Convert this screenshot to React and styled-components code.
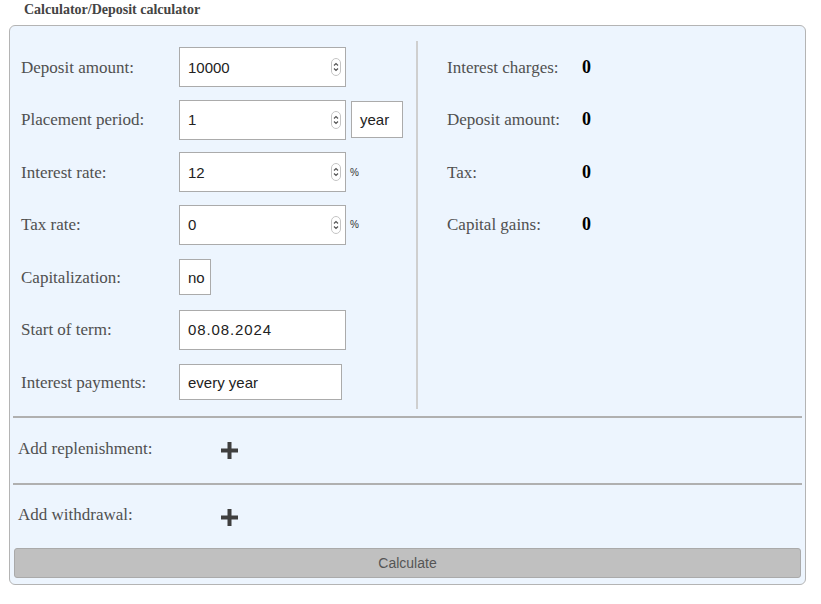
import React from "react";
import styled, { createGlobalStyle } from "styled-components";

const GlobalStyle = createGlobalStyle`
    body {
        margin: 0;
        background: #fff;
        font-family: "Liberation Serif", "Times New Roman", serif;
    }
    * {
        box-sizing: border-box;
    }
`
const Page = styled.div`
    width: 821px;
`
const Title = styled.div`
    padding-left: 24px;
    height: 25px;
    line-height: 20px;
    font-size: 14px;
    font-weight: bold;
    color: #444;
`
const Panel = styled.div`
    margin-left: 9px;
    width: 797px;
    border: 1px solid #b4b4b4;
    border-radius: 6px;
    background-color: #edf5fe;
    padding-bottom: 6px;
`
const Top = styled.div`
    display: flex;
    padding-top: 15px;
`
const LeftCol = styled.div`
    width: 408px;
    padding-left: 11px;
    border-right: 2px solid #cfcfcf;
`
const RightCol = styled.div`
    padding-left: 29px;
`
const Row = styled.div`
    height: 52.5px;
    display: flex;
    align-items: center;
`
const Label = styled.div`
    width: ${props => props.w}px;
    flex-shrink: 0;
    font-size: 17px;
    color: #505050;
    padding-top: 1px;
`
const Value = styled.div`
    font-size: 18px;
    font-weight: bold;
    color: #000;
`
const Field = styled.div`
    width: ${props => props.w}px;
    height: ${props => props.h || 40}px;
    border: 1px solid #ababab;
    background: #fff;
    display: flex;
    align-items: center;
    justify-content: space-between;
    padding: 0 4px 0 8px;
    font-family: "Liberation Sans", Arial, sans-serif;
    font-size: 15px;
    letter-spacing: ${props => props.spaced ? "0.9px" : "0"};
    color: #222;
    flex-shrink: 0;
`
const Unit = styled(Field)`
    margin-left: 5px;
`
const Percent = styled.span`
    margin-left: 4px;
    font-family: "Liberation Sans", Arial, sans-serif;
    font-size: 10px;
    color: #333;
`
const Divider = styled.div`
    height: 2px;
    background: #b0b0b0;
    margin: ${props => props.gap || 0}px 3px 0;
`
const Section = styled.div`
    height: ${props => props.h}px;
    display: flex;
    align-items: center;
    padding: 0 8px 3px;
`
const SectionLabel = styled.div`
    width: 203px;
    font-size: 17px;
    color: #505050;
`
const PlusButton = styled.div`
    display: flex;
    margin-top: ${props => props.offset || 0}px;
`
const CalcButton = styled.div`
    margin: 0 4px;
    height: 30px;
    border: 1px solid #aaa;
    border-radius: 3px;
    background: #c0c0c0;
    display: flex;
    align-items: center;
    justify-content: center;
    font-family: "Liberation Sans", Arial, sans-serif;
    font-size: 14px;
    color: #555;
`

function Spinner() {
    return (
        <svg width="10" height="18" viewBox="0 0 10 18">
            <rect x="0.5" y="0.5" width="9" height="17" rx="4.5" fill="#fff" stroke="#c4c4c4" />
            <path d="M3 7.5 L5 5.5 L7 7.5" fill="none" stroke="#555" strokeWidth="1.2" />
            <path d="M3 10.5 L5 12.5 L7 10.5" fill="none" stroke="#555" strokeWidth="1.2" />
        </svg>
    )
}

function Plus() {
    return (
        <svg width="17" height="17" viewBox="0 0 17 17">
            <rect x="6.5" y="0" width="4" height="17" fill="#3f3f3f" />
            <rect x="0" y="6.5" width="17" height="4" fill="#3f3f3f" />
        </svg>
    )
}

function NumberField({ value }) {
    return (
        <Field w={167}>
            {value}
            <Spinner />
        </Field>
    )
}

const results = ["Interest charges:", "Deposit amount:", "Tax:", "Capital gains:"];

export default function App() {
    return (
        <Page>
            <GlobalStyle />
            <Title>Calculator/Deposit calculator</Title>
            <Panel>
                <Top>
                    <LeftCol>
                        <Row>
                            <Label w={158}>Deposit amount:</Label>
                            <NumberField value="10000" />
                        </Row>
                        <Row>
                            <Label w={158}>Placement period:</Label>
                            <NumberField value="1" />
                            <Unit w={52} h={37}>year</Unit>
                        </Row>
                        <Row>
                            <Label w={158}>Interest rate:</Label>
                            <NumberField value="12" />
                            <Percent>%</Percent>
                        </Row>
                        <Row>
                            <Label w={158}>Tax rate:</Label>
                            <NumberField value="0" />
                            <Percent>%</Percent>
                        </Row>
                        <Row>
                            <Label w={158}>Capitalization:</Label>
                            <Field w={32} h={36}>no</Field>
                        </Row>
                        <Row>
                            <Label w={158}>Start of term:</Label>
                            <Field w={167} spaced>08.08.2024</Field>
                        </Row>
                        <Row>
                            <Label w={158}>Interest payments:</Label>
                            <Field w={163} h={36}>every year</Field>
                        </Row>
                    </LeftCol>
                    <RightCol>
                        {results.map(r => (
                            <Row key={r}>
                                <Label w={135}>{r}</Label>
                                <Value>0</Value>
                            </Row>
                        ))}
                    </RightCol>
                </Top>
                <Divider gap={7} />
                <Section h={65}>
                    <SectionLabel>Add replenishment:</SectionLabel>
                    <PlusButton offset={3}><Plus /></PlusButton>
                </Section>
                <Divider />
                <Section h={63}>
                    <SectionLabel>Add withdrawal:</SectionLabel>
                    <PlusButton offset={6}><Plus /></PlusButton>
                </Section>
                <CalcButton>Calculate</CalcButton>
            </Panel>
        </Page>
    )
}
